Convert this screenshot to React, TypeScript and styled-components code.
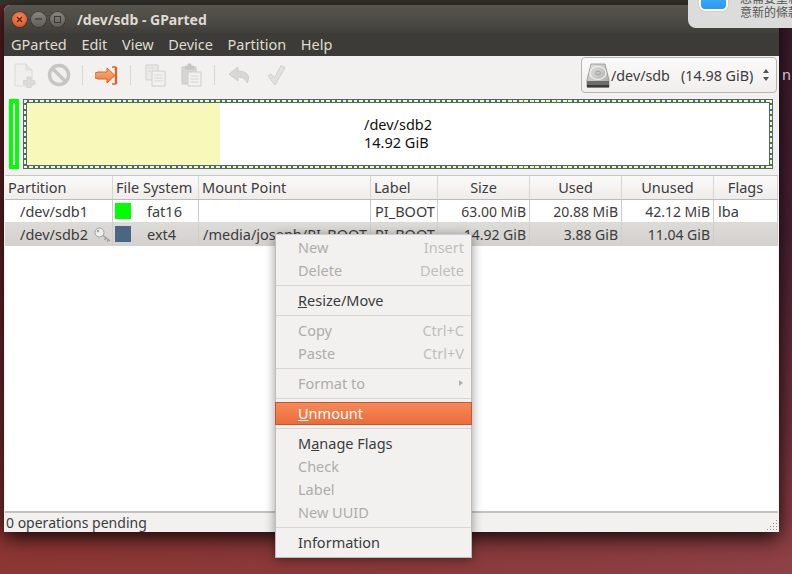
import styled, { createGlobalStyle } from "styled-components";

const GlobalStyle = createGlobalStyle`
    html, body {
        margin: 0;
        padding: 0;
        overflow: hidden;
    }

    body {
        font-family: "Noto Sans", "Open Sans", sans-serif;
        font-size: 14.5px;
        color: #3c3c3c;
    }
`;

const Desktop = styled.div`
    position: relative;
    width: 792px;
    height: 574px;
    overflow: hidden;
    background:
        linear-gradient(90deg, rgba(140, 40, 25, 0.4) 0%, rgba(120, 35, 25, 0.25) 50%, rgba(120, 35, 25, 0) 100%),
        linear-gradient(180deg, #3a1a2b 0%, #4a2032 40%, #70303c 75%, #8a3c42 92%, #8e4146 100%);
`;

const TopPanel = styled.div`
    height: 5px;
    background: #37362f;
`;

const Window = styled.div`
    display: flex;
    flex-direction: column;
    width: 775px;
    height: 527px;
    margin-left: 4px;
    background: #f2f1f0;
    border-radius: 6px 6px 0 0;
    box-shadow: 0 5px 20px rgba(0, 0, 0, 0.9);
`;

const TitleBar = styled.div`
    display: flex;
    align-items: center;
    height: 28px;
    padding-left: 8px;
    border-radius: 6px 6px 0 0;
    background: linear-gradient(180deg, #58564d 0%, #4a4943 60%, #3f3e39 100%);
`;

const WindowButtons = styled.div`
    display: flex;
    gap: 4px;
    margin-right: 12px;
`;

const WindowButton = styled.div<{ $close?: boolean }>`
    display: flex;
    align-items: center;
    justify-content: center;
    width: 15px;
    height: 15px;
    border-radius: 50%;
    background: ${(props) => props.$close
        ? "radial-gradient(circle at 50% 35%, #f58a58, #d8481c)"
        : "linear-gradient(180deg, #88867e, #5f5d56)"};
    box-shadow: 0 0 0 0.5px #2d2c28;
`;

const Title = styled.div`
    font-weight: 700;
    font-size: 14px;
    color: #dfdbd2;
`;

const MenuBar = styled.div`
    display: flex;
    align-items: center;
    height: 23px;
    box-sizing: border-box;
    padding: 0 0 2px 7px;
    gap: 14.6px;
    background: #3c3b37;
    color: #dfdbd2;
`;

const Toolbar = styled.div`
    display: flex;
    align-items: center;
    height: 41px;
    padding-bottom: 3px;
    box-sizing: border-box;
    flex-shrink: 0;
`;

const ToolIcon = styled.svg<{ $ml: number }>`
    display: block;
    margin-left: ${(props) => props.$ml}px;
`;

const ToolSeparator = styled.div<{ $ml: number }>`
    width: 1px;
    height: 20px;
    margin-left: ${(props) => props.$ml}px;
    background: #d8d6d3;
`;

const DeviceCombo = styled.div`
    display: flex;
    align-items: center;
    width: 196px;
    height: 36px;
    box-sizing: border-box;
    margin-left: auto;
    margin-right: 2px;
    padding: 0 5px 0 4px;
    border: 1px solid #b8b5b0;
    border-radius: 4px;
    background: linear-gradient(180deg, #fbfafa, #f0efed);
`;

const DeviceText = styled.span`
    margin-left: 1px;
    font-size: 14.3px;
    white-space: pre;
    flex: 1;
`;

const ComboArrows = styled.svg`
    display: block;
    margin-right: 1px;
`;

const GraphArea = styled.div`
    display: flex;
    gap: 4px;
    height: 70px;
    padding: 2px 5px 0;
    flex-shrink: 0;
`;

const SmallPartition = styled.div`
    width: 10px;
    height: 70px;
    box-sizing: border-box;
    border: 4px solid #00ff00;
    background: #fff;
`;

const BigPartitionFrame = styled.div`
    width: 750px;
    height: 70px;
    box-sizing: border-box;
    padding: 1px;
    background: #496783;
`;

const dashH = "repeating-linear-gradient(90deg, #fbfba6 0 3.5px, transparent 3.5px 5.5px)";
const dashV = "repeating-linear-gradient(180deg, #fbfba6 0 3.5px, transparent 3.5px 5.5px)";

const BigPartitionDash = styled.div`
    height: 100%;
    box-sizing: border-box;
    padding: 3px;
    background:
        ${dashH} top / 100% 2px no-repeat,
        ${dashH} bottom / 100% 2px no-repeat,
        ${dashV} left / 2px 100% no-repeat,
        ${dashV} right / 2px 100% no-repeat;
`;

const BigPartitionBody = styled.div`
    display: flex;
    height: 100%;
    background: #fff;
`;

const UsedFill = styled.div`
    width: 193px;
    background: #f8f8ba;
`;

const GraphLabel = styled.div`
    margin-left: 144px;
    padding-top: 12px;
    line-height: 18px;
    color: #111;
`;

const Table = styled.div`
    display: flex;
    flex-direction: column;
    flex: 1;
    margin: 6px 1px 0;
    background: #fff;
    border-top: 1px solid #c8c6c3;
`;

const columns = "108px 86px 172px 67px 92px 92px 92px 64px";

const HeaderRow = styled.div`
    display: grid;
    grid-template-columns: ${columns};
    height: 24px;
    box-sizing: border-box;
    background: linear-gradient(180deg, #fbfafa, #efedeb);
    border-bottom: 1px solid #bdbbb8;
`;

const HeaderCell = styled.div<{ $center?: boolean }>`
    display: flex;
    align-items: center;
    justify-content: ${(props) => (props.$center ? "center" : "flex-start")};
    padding-left: ${(props) => (props.$center ? 0 : 3)}px;
    padding-bottom: 2px;
    box-sizing: border-box;
    border-right: 1px solid #d8d6d3;
    white-space: nowrap;
`;

const Row = styled.div<{ $selected?: boolean }>`
    display: grid;
    grid-template-columns: ${columns};
    height: 23px;
    background: ${(props) => (props.$selected ? "linear-gradient(180deg, #dddbd8, #d4d1ce)" : "#fff")};
    border-bottom: 1px solid ${(props) => (props.$selected ? "#d4d1ce" : "#dcdad7")};
    box-sizing: border-box;
`;

const Cell = styled.div<{ $pad?: number }>`
    display: flex;
    align-items: center;
    padding-left: ${(props) => props.$pad ?? 4}px;
    border-right: 1px solid #cfcdca;
    white-space: nowrap;
    overflow: hidden;
`;

const SizeCell = styled(Cell)`
    justify-content: flex-end;
    padding: 0 3px 0 0;
    font-size: 14px;
`;

const Swatch = styled.div<{ $color: string }>`
    width: 16px;
    height: 16px;
    margin-right: 16px;
    flex-shrink: 0;
    background: ${(props) => props.$color};
`;

const KeyIcon = styled.svg`
    display: block;
    margin-left: 6px;
    flex-shrink: 0;
`;

const TableFill = styled.div`
    flex: 1;
    background: #fff;
    border-bottom: 2px solid #c4c2bf;
`;

const StatusBar = styled.div`
    position: relative;
    display: flex;
    align-items: center;
    height: 19px;
    padding-left: 2px;
    font-size: 14px;
    flex-shrink: 0;
`;

const ResizeGrip = styled.svg`
    position: absolute;
    right: 1px;
    bottom: 1px;
`;

const ContextMenu = styled.div`
    position: absolute;
    left: 275px;
    top: 234px;
    width: 197px;
    box-sizing: border-box;
    padding: 1px 0 3px;
    background: #f2f1f0;
    border: 1px solid #bdbbb8;
    border-top-color: #d0cecb;
    box-shadow: 0 2px 10px rgba(0, 0, 0, 0.4);
`;

const MenuItem = styled.div<{ $disabled?: boolean; $active?: boolean }>`
    display: flex;
    align-items: center;
    justify-content: space-between;
    height: 23px;
    box-sizing: border-box;
    padding: 0 7px 2px 22px;
    color: ${(props) => (props.$active ? "#fff" : props.$disabled ? "#aeacaa" : "#3c3c3c")};
    ${(props) => props.$active && `
        background: linear-gradient(180deg, #f58a58, #ec6c3a);
        border: 1px solid #c9562a;
        margin: 0 -1px;
    `}
`;

const Shortcut = styled.span`
    color: #c0bebc;
`;

const SubmenuArrow = styled.span`
    width: 0;
    height: 0;
    margin-right: 1px;
    border-left: 4px solid #b0aeac;
    border-top: 3px solid transparent;
    border-bottom: 3px solid transparent;
`;

const MenuSeparator = styled.div`
    height: 7px;
    display: flex;
    align-items: center;

    &::before {
        content: "";
        flex: 1;
        height: 1px;
        background: #d8d6d3;
    }
`;

const Notification = styled.div`
    position: absolute;
    right: 0;
    top: 0;
    width: 104px;
    height: 28px;
    overflow: hidden;
    background: #dcdcda;
    border-radius: 0 0 0 8px;
`;

const AppBadge = styled.div`
    position: absolute;
    left: 11px;
    top: -18px;
    width: 29px;
    height: 29px;
    box-sizing: border-box;
    border: 2px solid #fff;
    border-radius: 6px;
    background: linear-gradient(180deg, #4fc3fa, #2f96f5);
    box-shadow: 0 0 1px rgba(0, 0, 0, 0.5);
`;

const NotificationText = styled.div`
    position: absolute;
    left: 52px;
    top: -9px;
    width: 80px;
    font-family: "Noto Sans CJK TC", "Noto Sans", sans-serif;
    font-size: 12px;
    line-height: 14px;
    white-space: nowrap;
    color: #555;
`;

const PeekText = styled.span`
    position: absolute;
    left: 782px;
    top: 64px;
    color: #c9c3c6;
`;

const headers = ["Partition", "File System", "Mount Point", "Label", "Size", "Used", "Unused", "Flags"];

function NewIcon() {
    return (
        <ToolIcon $ml={10} width="22" height="25" viewBox="0 0 22 25">
            <path d="M1 1h11l6 6v16H1z" fill="#f0efed" stroke="#dcdbd9" />
            <path d="M12 1v6h6" fill="#e6e5e3" stroke="#dcdbd9" />
            <path d="M13 14h4v3.500h4v4h-4V25h-4v-3.500H9.500v-4H13z" fill="#dcdcda" stroke="#cfcfcd" strokeWidth="0.7" />
        </ToolIcon>
    );
}

function StopIcon() {
    return (
        <ToolIcon $ml={11} width="24" height="24" viewBox="0 0 24 24">
            <circle cx="12" cy="12" r="9.500" fill="#f0efed" stroke="#c6c5c3" strokeWidth="3.400" />
            <path d="M5.500 5.500l13 13" stroke="#c6c5c3" strokeWidth="3.400" />
        </ToolIcon>
    );
}

function ApplyArrowIcon() {
    return (
        <ToolIcon $ml={12} width="23" height="19" viewBox="0 0 23 19">
            <defs>
                <linearGradient id="applyArrow" x1="0" y1="0" x2="0" y2="1">
                    <stop offset="0" stopColor="#f8b47c" />
                    <stop offset="1" stopColor="#ea7a3c" />
                </linearGradient>
            </defs>
            <path d="M3 6h9V2l8 7.500-8 7.500v-4H3a3.500 3.500 0 0 1 0-7z" fill="url(#applyArrow)" stroke="#d8652a" />
            <path d="M21 1v17" stroke="#d8652a" strokeWidth="2.400" />
            <path d="M17 1h4M17 18h4" stroke="#d8652a" strokeWidth="1.300" />
        </ToolIcon>
    );
}

function CopyIcon() {
    return (
        <ToolIcon $ml={14} width="21" height="23" viewBox="0 0 21 23">
            <path d="M1 1h12v15H1z" fill="#ebeae8" stroke="#d0cfcd" />
            <path d="M7 7h13v15H7z" fill="#f2f1f0" stroke="#cfcecc" />
            <path d="M9.500 11h8M9.500 14h8M9.500 17h8M3 4h7M3 7h3" stroke="#d6d5d3" />
        </ToolIcon>
    );
}

function PasteIcon() {
    return (
        <ToolIcon $ml={15} width="21" height="24" viewBox="0 0 21 24">
            <path d="M1 4h14v17H1z" fill="#d6d5d3" stroke="#c8c7c5" />
            <path d="M4.500 3h2.500V1h3v2h2.500v3h-8z" fill="#c8c7c5" stroke="#bfbebc" strokeWidth="0.6" />
            <path d="M7 9h13v14H7z" fill="#f2f1f0" stroke="#cfcecc" />
            <path d="M9.500 13h8M9.500 16h8M9.500 19h8" stroke="#d6d5d3" />
        </ToolIcon>
    );
}

function UndoIcon() {
    return (
        <ToolIcon $ml={13} width="23" height="18" viewBox="0 0 23 18">
            <path d="M10 1L1 8l9 7v-4c5 0 8 2 9 6 4-7 0-12-9-12z" fill="#d8d7d5" stroke="#cfcecc" strokeLinejoin="round" />
        </ToolIcon>
    );
}

function ApplyCheckIcon() {
    return (
        <ToolIcon $ml={16} width="19" height="23" viewBox="0 0 19 23">
            <path d="M1 12l3-2 3.500 4L14 1.500l4 2L8 21z" fill="#e2e1df" stroke="#d0cfcd" strokeLinejoin="round" />
        </ToolIcon>
    );
}

function DiskIcon() {
    return (
        <svg width="24" height="25" viewBox="0 0 24 25" style={{ display: "block" }}>
            <defs>
                <linearGradient id="disk" x1="0" y1="0" x2="1" y2="1">
                    <stop offset="0" stopColor="#e4e4e2" />
                    <stop offset="1" stopColor="#a8a8a6" />
                </linearGradient>
            </defs>
            <path d="M5 1h14l4 16v7H1v-7z" fill="url(#disk)" stroke="#8e8e8c" strokeWidth="0.8" />
            <ellipse cx="12" cy="10" rx="8" ry="6.500" fill="none" stroke="#f2f2f0" strokeWidth="1.200" />
            <ellipse cx="12" cy="10" rx="2.500" ry="1.800" fill="#c4c4c2" stroke="#909090" strokeWidth="0.6" />
            <path d="M1 18h22v6H1z" fill="#6c6c6a" />
            <path d="M1 22h22v2.500H1z" fill="#3a3a38" />
        </svg>
    );
}

export default function App() {
    return (
        <Desktop>
            <GlobalStyle />
            <TopPanel />
            <Window>
                <TitleBar>
                    <WindowButtons>
                        <WindowButton $close>
                            <svg width="7" height="7" viewBox="0 0 7 7"><path d="M1 1l5 5M6 1l-5 5" stroke="#5a2210" strokeWidth="1.300" /></svg>
                        </WindowButton>
                        <WindowButton>
                            <svg width="7" height="2" viewBox="0 0 7 2"><path d="M0 1h7" stroke="#3b3a36" strokeWidth="1.300" /></svg>
                        </WindowButton>
                        <WindowButton>
                            <svg width="7" height="7" viewBox="0 0 7 7"><rect x="0.500" y="0.500" width="6" height="6" fill="none" stroke="#3b3a36" /></svg>
                        </WindowButton>
                    </WindowButtons>
                    <Title>/dev/sdb - GParted</Title>
                </TitleBar>
                <MenuBar>
                    {["GParted", "Edit", "View", "Device", "Partition", "Help"].map((item) => (
                        <span key={item}>{item}</span>
                    ))}
                </MenuBar>
                <Toolbar>
                    <NewIcon />
                    <StopIcon />
                    <ToolSeparator $ml={11} />
                    <ApplyArrowIcon />
                    <ToolSeparator $ml={12} />
                    <CopyIcon />
                    <PasteIcon />
                    <ToolSeparator $ml={12} />
                    <UndoIcon />
                    <ApplyCheckIcon />
                    <DeviceCombo>
                        <DiskIcon />
                        <DeviceText>/dev/sdb   (14.98 GiB)</DeviceText>
                        <ComboArrows width="8" height="14" viewBox="0 0 8 14">
                            <path d="M4 1l3 4H1zM4 13L1 9h6z" fill="#55534f" />
                        </ComboArrows>
                    </DeviceCombo>
                </Toolbar>
                <GraphArea>
                    <SmallPartition />
                    <BigPartitionFrame>
                        <BigPartitionDash>
                            <BigPartitionBody>
                                <UsedFill />
                                <GraphLabel>/dev/sdb2<br />14.92 GiB</GraphLabel>
                            </BigPartitionBody>
                        </BigPartitionDash>
                    </BigPartitionFrame>
                </GraphArea>
                <Table>
                    <HeaderRow>
                        {headers.map((header, index) => (
                            <HeaderCell key={header} $center={index >= 4}>{header}</HeaderCell>
                        ))}
                    </HeaderRow>
                    <Row>
                        <Cell $pad={15}>/dev/sdb1</Cell>
                        <Cell $pad={2}><Swatch $color="#00ff00" />fat16</Cell>
                        <Cell />
                        <Cell>PI_BOOT</Cell>
                        <SizeCell>63.00 MiB</SizeCell>
                        <SizeCell>20.88 MiB</SizeCell>
                        <SizeCell>42.12 MiB</SizeCell>
                        <Cell>lba</Cell>
                    </Row>
                    <Row $selected>
                        <Cell $pad={15}>
                            /dev/sdb2
                            <KeyIcon width="17" height="15" viewBox="0 0 17 15">
                                <circle cx="5.500" cy="5.500" r="4.500" fill="#eeeeec" stroke="#a0a09e" />
                                <circle cx="4" cy="4" r="1.200" fill="#a0a09e" />
                                <path d="M9 8.500l7 5.500M12 11l-1.500 2M14.500 13l-1.500 1.500" stroke="#a0a09e" strokeWidth="1.500" />
                            </KeyIcon>
                        </Cell>
                        <Cell $pad={2}><Swatch $color="#496783" />ext4</Cell>
                        <Cell>/media/joseph/PI_BOOT</Cell>
                        <Cell>PI_BOOT</Cell>
                        <SizeCell>14.92 GiB</SizeCell>
                        <SizeCell>3.88 GiB</SizeCell>
                        <SizeCell>11.04 GiB</SizeCell>
                        <Cell />
                    </Row>
                    <TableFill />
                </Table>
                <StatusBar>
                    0 operations pending
                    <ResizeGrip width="11" height="11" viewBox="0 0 11 11">
                        <path d="M9 0h1v1H9zM6 3h1v1H6zM9 3h1v1H9zM3 6h1v1H3zM6 6h1v1H6zM9 6h1v1H9zM0 9h1v1H0zM3 9h1v1H3zM6 9h1v1H6zM9 9h1v1H9z" fill="#8c8a88" />
                    </ResizeGrip>
                </StatusBar>
            </Window>
            <PeekText>n</PeekText>
            <Notification>
                <AppBadge />
                <NotificationText>您需要重新同<br />意新的條款</NotificationText>
            </Notification>
            <ContextMenu>
                <MenuItem $disabled>New<Shortcut>Insert</Shortcut></MenuItem>
                <MenuItem $disabled>Delete<Shortcut>Delete</Shortcut></MenuItem>
                <MenuSeparator />
                <MenuItem><span><u>R</u>esize/Move</span></MenuItem>
                <MenuSeparator />
                <MenuItem $disabled>Copy<Shortcut>Ctrl+C</Shortcut></MenuItem>
                <MenuItem $disabled>Paste<Shortcut>Ctrl+V</Shortcut></MenuItem>
                <MenuSeparator />
                <MenuItem $disabled>Format to<SubmenuArrow /></MenuItem>
                <MenuSeparator />
                <MenuItem $active><span><u>U</u>nmount</span></MenuItem>
                <MenuSeparator />
                <MenuItem><span>M<u>a</u>nage Flags</span></MenuItem>
                <MenuItem $disabled>Check</MenuItem>
                <MenuItem $disabled>Label</MenuItem>
                <MenuItem $disabled>New UUID</MenuItem>
                <MenuSeparator />
                <MenuItem>Information</MenuItem>
            </ContextMenu>
        </Desktop>
    );
}
